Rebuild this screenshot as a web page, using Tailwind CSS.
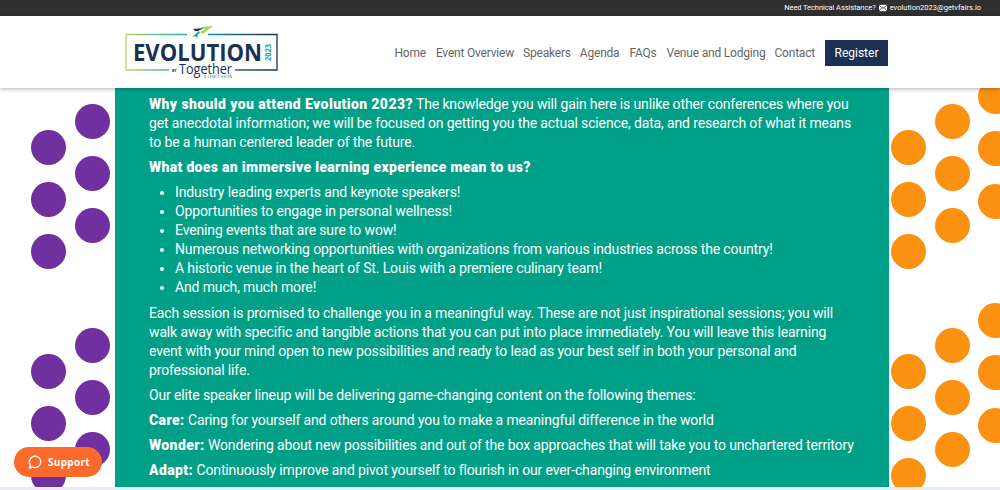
<!DOCTYPE html>
<html lang="en">
<head>
  <meta charset="UTF-8" />
  <meta name="viewport" content="width=device-width, initial-scale=1.0" />
  <title>Evolution 2023</title>
  <script src="https://cdn.jsdelivr.net/npm/@tailwindcss/browser@4"></script>
</head>
<body class="relative h-[490px] overflow-hidden bg-white font-['Roboto',sans-serif]">

  <!-- Top bar -->
  <div class="flex h-[16px] items-center justify-end bg-[#2f2f2f] pr-[19px] text-[7.5px] text-white">
    <span class="tracking-[-0.08px]">Need Technical Assistance?</span>
    <svg class="mx-[3px] h-[8px] w-[8px]" viewBox="0 0 10 8"><rect width="10" height="8" fill="#fff"/><path d="M0 .5l5 4 5-4M0 8l3.5-4.5M10 8L6.500 3.500" fill="none" stroke="#2f2f2f" stroke-width="1"/></svg>
    <span>evolution2023@getvfairs.io</span>
  </div>

  <!-- Header -->
  <header class="relative z-10 flex h-[72px] items-center justify-between bg-white pl-[125px] pr-[112px] shadow-[0_1px_4px_rgba(0,0,0,0.3)]">
    <svg class="h-[56px] w-[153px]" viewBox="0 0 153 56">
      <defs>
        <linearGradient id="frame" x1="0" x2="1" y1="0" y2="0">
          <stop offset="0" stop-color="#b5d568"/>
          <stop offset="0.4" stop-color="#1fa9b5"/>
          <stop offset="1" stop-color="#1b3154"/>
        </linearGradient>
      </defs>
      <path d="M62 10.500H1V46H44M110 46H152V10.500H83" fill="none" stroke="url(#frame)" stroke-width="1.300"/>
      <path d="M75 3L88 2 78 10 75 8 80 5z" fill="#a8d45c"/>
      <path d="M68 5l11-1-6 3-3 0z" fill="#2c3650"/>
      <path d="M67 13l7-6 1 2-2 1-1 5-1-3z" fill="#14a58f"/>
      <text x="8" y="37" textLength="129" lengthAdjust="spacingAndGlyphs" font-family="Open Sans, sans-serif" font-weight="700" font-size="24" fill="#1b3154">EVOLUTION</text>
      <text transform="translate(146 37) rotate(-90)" textLength="17" lengthAdjust="spacingAndGlyphs" font-family="Open Sans, sans-serif" font-weight="700" font-size="9" fill="#1fa98f">2023</text>
      <text x="47" y="48" font-family="Open Sans, sans-serif" font-weight="700" font-size="3.500" fill="#1b3154">BY</text>
      <text x="54" y="50" textLength="53" lengthAdjust="spacingAndGlyphs" font-family="Open Sans, sans-serif" font-size="15" fill="#1b3154">Together</text>
      <text x="79" y="53.500" textLength="28" font-family="Open Sans, sans-serif" font-weight="700" font-size="2.500" fill="#1fa98f">A CREDIT UNION</text>
    </svg>
    <nav class="mt-[2px] flex items-center text-[12px] tracking-[-0.2px] text-[#666]">
      <a class="mr-[10px]">Home</a>
      <a class="mr-[9px]">Event Overview</a>
      <a class="mr-[9px]">Speakers</a>
      <a class="mr-[10px]">Agenda</a>
      <a class="mr-[10px]">FAQs</a>
      <a class="mr-[9px]">Venue and Lodging</a>
      <a class="mr-[10px]">Contact</a>
      <a class="flex h-[26px] w-[63px] items-center justify-center bg-[#1b3154] text-[12px] tracking-normal text-white">Register</a>
    </nav>
  </header>

  <!-- Decorative dots -->
  <div class="absolute left-[31px] top-[130px] h-[35px] w-[35px] rounded-full bg-[#7030a0]"></div>
  <div class="absolute left-[75px] top-[104px] h-[35px] w-[35px] rounded-full bg-[#7030a0]"></div>
  <div class="absolute left-[31px] top-[182px] h-[35px] w-[35px] rounded-full bg-[#7030a0]"></div>
  <div class="absolute left-[75px] top-[156px] h-[35px] w-[35px] rounded-full bg-[#7030a0]"></div>
  <div class="absolute left-[31px] top-[234px] h-[35px] w-[35px] rounded-full bg-[#7030a0]"></div>
  <div class="absolute left-[75px] top-[208px] h-[35px] w-[35px] rounded-full bg-[#7030a0]"></div>
  <div class="absolute left-[31px] top-[354px] h-[35px] w-[35px] rounded-full bg-[#7030a0]"></div>
  <div class="absolute left-[75px] top-[328px] h-[35px] w-[35px] rounded-full bg-[#7030a0]"></div>
  <div class="absolute left-[31px] top-[406px] h-[35px] w-[35px] rounded-full bg-[#7030a0]"></div>
  <div class="absolute left-[75px] top-[380px] h-[35px] w-[35px] rounded-full bg-[#7030a0]"></div>
  <div class="absolute left-[31px] top-[458px] h-[35px] w-[35px] rounded-full bg-[#7030a0]"></div>
  <div class="absolute left-[75px] top-[432px] h-[35px] w-[35px] rounded-full bg-[#7030a0]"></div>

  <div class="absolute left-[891px] top-[130px] h-[35px] w-[35px] rounded-full bg-[#fb9111]"></div>
  <div class="absolute left-[935px] top-[104px] h-[35px] w-[35px] rounded-full bg-[#fb9111]"></div>
  <div class="absolute left-[978px] top-[79px] h-[35px] w-[35px] rounded-full bg-[#fb9111]"></div>
  <div class="absolute left-[891px] top-[182px] h-[35px] w-[35px] rounded-full bg-[#fb9111]"></div>
  <div class="absolute left-[935px] top-[156px] h-[35px] w-[35px] rounded-full bg-[#fb9111]"></div>
  <div class="absolute left-[978px] top-[131px] h-[35px] w-[35px] rounded-full bg-[#fb9111]"></div>
  <div class="absolute left-[891px] top-[234px] h-[35px] w-[35px] rounded-full bg-[#fb9111]"></div>
  <div class="absolute left-[935px] top-[208px] h-[35px] w-[35px] rounded-full bg-[#fb9111]"></div>
  <div class="absolute left-[978px] top-[184px] h-[35px] w-[35px] rounded-full bg-[#fb9111]"></div>
  <div class="absolute left-[891px] top-[354px] h-[35px] w-[35px] rounded-full bg-[#fb9111]"></div>
  <div class="absolute left-[935px] top-[328px] h-[35px] w-[35px] rounded-full bg-[#fb9111]"></div>
  <div class="absolute left-[978px] top-[303px] h-[35px] w-[35px] rounded-full bg-[#fb9111]"></div>
  <div class="absolute left-[891px] top-[406px] h-[35px] w-[35px] rounded-full bg-[#fb9111]"></div>
  <div class="absolute left-[935px] top-[380px] h-[35px] w-[35px] rounded-full bg-[#fb9111]"></div>
  <div class="absolute left-[978px] top-[355px] h-[35px] w-[35px] rounded-full bg-[#fb9111]"></div>
  <div class="absolute left-[891px] top-[458px] h-[35px] w-[35px] rounded-full bg-[#fb9111]"></div>
  <div class="absolute left-[935px] top-[432px] h-[35px] w-[35px] rounded-full bg-[#fb9111]"></div>
  <div class="absolute left-[978px] top-[408px] h-[35px] w-[35px] rounded-full bg-[#fb9111]"></div>

  <!-- Main content -->
  <main class="relative ml-[115px] h-[399px] w-[774px] bg-[#00a088] pl-[34px] pr-[32px] pt-[7px] text-[14px] leading-[19px] tracking-[-0.14px] text-white">
    <p class="mb-[6.2px]"><b class="font-black tracking-[0.4px]">Why should you attend Evolution 2023?</b> The knowledge you will gain here is unlike other conferences where you get anecdotal information; we will be focused on getting you the actual science, data, and research of what it means to be a human centered leader of the future.</p>
    <p class="mb-[6.2px] font-black tracking-[0.32px]">What does an immersive learning experience mean to us?</p>
    <ul class="mb-[6.2px] list-disc pl-[26px]">
      <li>Industry leading experts and keynote speakers!</li>
      <li>Opportunities to engage in personal wellness!</li>
      <li>Evening events that are sure to wow!</li>
      <li>Numerous networking opportunities with organizations from various industries across the country!</li>
      <li>A historic venue in the heart of St. Louis with a premiere culinary team!</li>
      <li>And much, much more!</li>
    </ul>
    <p class="mb-[6.2px]">Each session is promised to challenge you in a meaningful way. These are not just inspirational sessions; you will walk away with specific and tangible actions that you can put into place immediately. You will leave this learning event with your mind open to new possibilities and ready to lead as your best self in both your personal and professional life.</p>
    <p class="mb-[6.2px]">Our elite speaker lineup will be delivering game-changing content on the following themes:</p>
    <p class="mb-[6.2px]"><b class="font-black tracking-[0.4px]">Care:</b> Caring for yourself and others around you to make a meaningful difference in the world</p>
    <p class="mb-[6.2px]"><b class="font-black tracking-[0.4px]">Wonder:</b> Wondering about new possibilities and out of the box approaches that will take you to unchartered territory</p>
    <p><b class="font-black tracking-[0.4px]">Adapt:</b> Continuously improve and pivot yourself to flourish in our ever-changing environment</p>
  </main>

  <!-- Bottom edge of the window -->
  <div class="absolute bottom-0 left-0 h-[3px] w-full bg-[#e6eef8]"></div>

  <!-- Support widget -->
  <button class="absolute left-[14px] top-[447px] flex h-[30px] w-[88px] items-center gap-[6px] rounded-full bg-[#f96a2b] pl-[14px] font-['Open_Sans',sans-serif] text-[10px] font-bold tracking-[0.3px] text-white">
    <svg class="h-[14px] w-[14px]" viewBox="0 0 14 14" fill="none" stroke="#fff" stroke-width="1.400"><path d="M2.500 10.300A5.700 5.700 0 1 1 4.500 12L1.500 13z" stroke-linejoin="round"/></svg>
    Support
  </button>
</body>
</html>
